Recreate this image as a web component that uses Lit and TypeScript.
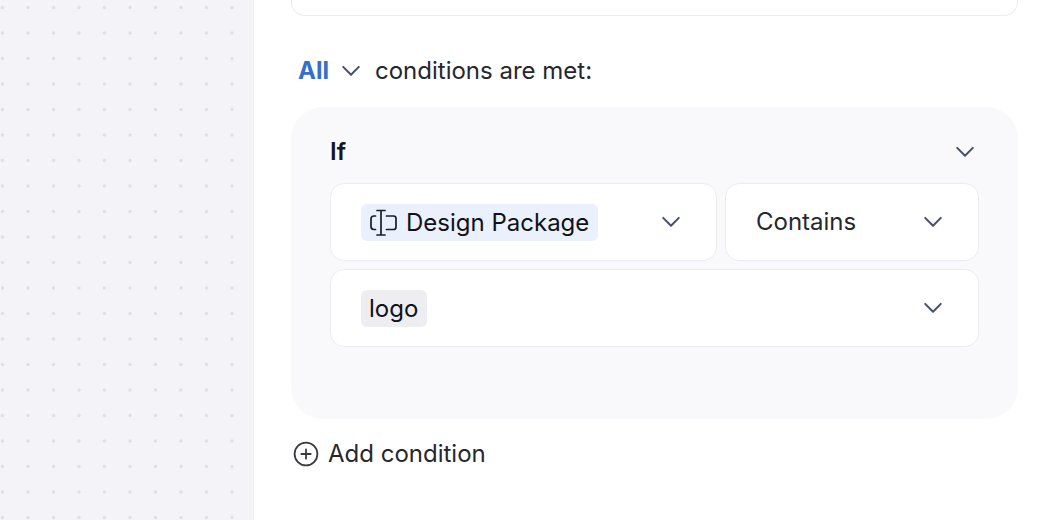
import { LitElement, html, css, svg } from "lit";
import { customElement, property } from "lit/decorators.js";

@customElement("chevron-icon")
class ChevronIcon extends LitElement {
  static styles = css`
    :host {
      display: block;
      flex: none;
      width: 28px;
      height: 28px;
      pointer-events: none;
    }
    .glyph {
      display: block;
      fill: none;
      stroke: #46506a;
      stroke-width: 2;
      stroke-linecap: round;
      stroke-linejoin: round;
    }
  `;

  render() {
    return html`<svg class="glyph" width="28" height="28" viewBox="0 0 28 28" aria-hidden="true">
      <path d="M6.2 9.9L14 17.7L21.8 9.9" />
    </svg>`;
  }
}

@customElement("select-field")
class SelectField extends LitElement {
  @property() label = "";
  @property() value = "";
  @property() tone: "plain" | "blue" | "grey" = "plain";
  @property({ type: Boolean }) textIcon = false;

  static styles = css`
    :host {
      display: block;
      min-width: 0;
    }
    .field {
      display: flex;
      align-items: center;
      justify-content: space-between;
      box-sizing: border-box;
      min-height: 78px;
      padding: 0 31px 0 30px;
      border: 1px solid #ededf1;
      border-radius: 14px;
      background: #fff;
    }
    .chip {
      display: flex;
      align-items: center;
      gap: 8px;
      box-sizing: border-box;
      height: 37px;
      border-radius: 6px;
    }
    .blue,
    .grey {
      padding: 1px 8px 0;
    }
    .blue {
      background: #eaf0fc;
    }
    .grey {
      background: #ededf2;
    }
    .select {
      appearance: none;
      margin: 0;
      padding: 0;
      border: 0;
      background: transparent;
      color: #111216;
      font: 400 24px/36px Inter, sans-serif;
      cursor: pointer;
    }
    .plain .select {
      color: #26272c;
    }
    .glyph {
      display: block;
      fill: none;
      stroke: #1c1e26;
      stroke-width: 1.7;
      stroke-linecap: round;
      stroke-linejoin: round;
    }
  `;

  render() {
    return html`<div class="field">
      <span class="chip ${this.tone}">
        ${this.textIcon
          ? html`<svg class="glyph" width="29" height="28" viewBox="0 0 29 28" aria-hidden="true">
              <path
                d="M8 1.5H16M8 26H16M12 1.5V26M6.5 7H5Q2 7 2 10V17.5Q2 20.500 5 20.500H6.500M17.500 7H24.500Q27 7 27 9.500V18Q27 20.500 24.500 20.500H17.500"
              />
            </svg>`
          : ""}
        <select class="select" aria-label=${this.label}>
          <option>${this.value}</option>
        </select>
      </span>
      <chevron-icon></chevron-icon>
    </div>`;
  }
}

@customElement("app-root")
class AppRoot extends LitElement {
  static styles = css`
    :host {
      display: flex;
      min-height: 100vh;
      overflow: hidden;
      background: #fff;
      color: #26272c;
      font: 400 24px/36px Inter, sans-serif;
    }
    .canvas {
      flex: none;
      width: 254px;
      box-sizing: border-box;
      border-right: 1px solid #f0f0f4;
      background: #f3f3f8;
    }
    .dots {
      display: block;
      width: 100%;
      height: 100%;
    }
    .dot {
      fill: #dfdfe5;
    }
    .panel {
      flex: 1;
      min-width: 0;
      padding: 0 19px 0 37px;
    }
    .previous {
      box-sizing: border-box;
      height: 16px;
      border: 1px solid #ededf1;
      border-top: 0;
      border-radius: 0 0 14px 14px;
    }
    .match {
      display: flex;
      align-items: center;
      margin: 37px 0 18px;
      padding-left: 7px;
    }
    .mode {
      appearance: none;
      margin: 0;
      padding: 0;
      border: 0;
      background: transparent;
      color: #3470cb;
      font: 700 24px/36px Inter, sans-serif;
    }
    .match chevron-icon {
      margin: 0 10px 0 8px;
    }
    .group {
      padding: 27px 39px 72px;
      border-radius: 32px;
      background: #f9f9fb;
    }
    .head {
      display: flex;
      align-items: center;
      justify-content: space-between;
      margin-bottom: 13px;
    }
    .title {
      margin: 0;
      color: #15161a;
      font: 600 24px/36px Inter, sans-serif;
    }
    .icon-button,
    .add {
      padding: 0;
      border: 0;
      background: transparent;
      cursor: pointer;
    }
    .fields {
      display: grid;
      grid-template-columns: 387fr 254fr;
      gap: 8px;
    }
    .wide {
      grid-column: 1 / -1;
    }
    .add {
      display: flex;
      align-items: center;
      gap: 7px;
      margin-top: 17px;
      color: #26272c;
      font: 400 24px/36px Inter, sans-serif;
    }
    .plus {
      display: block;
      fill: none;
      stroke: #3a3b40;
      stroke-width: 1.8;
      stroke-linecap: round;
    }
  `;

  render() {
    const spots = [
      [2.5, 7.5],
      [28, 7.5],
      [2.5, 33],
      [28, 33],
    ];
    return html`
      <div class="canvas">
        <svg class="dots" aria-hidden="true">
          <defs>
            <pattern id="grid" width="51" height="51" patternUnits="userSpaceOnUse">
              ${spots.map(([x, y]) => svg`<circle class="dot" cx=${x} cy=${y} r="1.7" />`)}
            </pattern>
          </defs>
          <rect width="100%" height="100%" fill="url(#grid)" />
        </svg>
      </div>
      <main class="panel">
        <div class="previous"></div>
        <div class="match">
          <select class="mode" id="mode" aria-label="Match mode">
            <option>All</option>
          </select>
          <chevron-icon></chevron-icon>
          <label for="mode">conditions are met:</label>
        </div>
        <section class="group">
          <div class="head">
            <h2 class="title">If</h2>
            <button class="icon-button" aria-label="Collapse"><chevron-icon></chevron-icon></button>
          </div>
          <div class="fields">
            <select-field label="Field" value="Design Package" tone="blue" textIcon></select-field>
            <select-field label="Operator" value="Contains"></select-field>
            <select-field class="wide" label="Value" value="logo" tone="grey"></select-field>
          </div>
        </section>
        <button class="add">
          <svg class="plus" width="30" height="30" viewBox="0 0 30 30" aria-hidden="true">
            <circle cx="15" cy="15" r="11.4" />
            <path d="M15 10.300V19.700M10.300 15H19.700" />
          </svg>
          Add condition
        </button>
      </main>
    `;
  }
}
